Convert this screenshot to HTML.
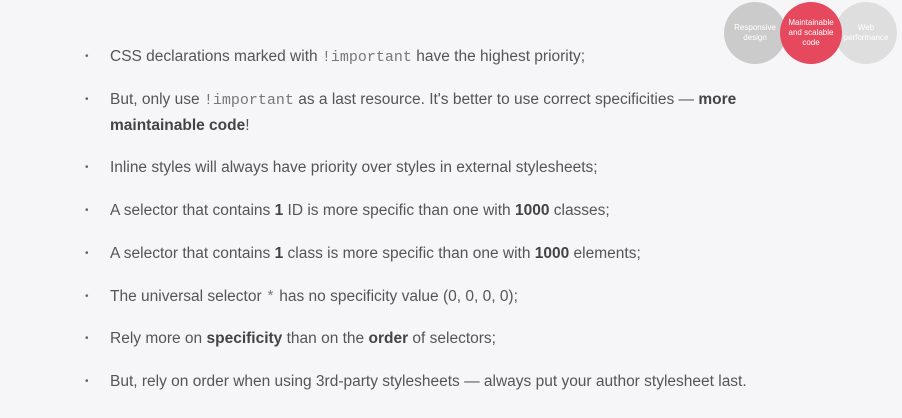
<!DOCTYPE html>
<html><head><style>
html,body{margin:0;padding:0;}
body{width:902px;height:418px;background:#f6f6f8;position:relative;overflow:hidden;font-family:"Liberation Sans",sans-serif;color:#555;}
.i{position:absolute;left:110px;font-size:15.5px;line-height:25px;white-space:nowrap;}
.i:before{content:"•";position:absolute;left:-25px;font-size:10px;color:#666;}
code{font-family:"Liberation Mono",monospace;font-size:15px;color:#777;}
b{color:#444;}
.c{position:absolute;top:2px;width:62px;height:62px;border-radius:50%;color:#fff;font-size:8px;line-height:10px;text-align:center;display:flex;align-items:center;justify-content:center;}
</style></head><body>
<div class="c" style="left:724px;background:#cbcbcb">Responsive<br>design</div>
<div class="c" style="left:835px;background:#dedede">Web<br>performance</div>
<div class="c" style="left:780px;background:#e6485e">Maintainable<br>and scalable<br>code</div>
<div class="i" style="top:44px">CSS declarations marked with <code>!important</code> have the highest priority;</div>
<div class="i" style="top:87px">But, only use <code>!important</code> as a last resource. It's better to use correct specificities — <b>more</b><br><b>maintainable code</b>!</div>
<div class="i" style="top:155px">Inline styles will always have priority over styles in external stylesheets;</div>
<div class="i" style="top:198px">A selector that contains <b>1</b> ID is more specific than one with <b>1000</b> classes;</div>
<div class="i" style="top:241px">A selector that contains <b>1</b> class is more specific than one with <b>1000</b> elements;</div>
<div class="i" style="top:284px">The universal selector <code>*</code> has no specificity value (0, 0, 0, 0);</div>
<div class="i" style="top:326px">Rely more on <b>specificity</b> than on the <b>order</b> of selectors;</div>
<div class="i" style="top:369px">But, rely on order when using 3rd-party stylesheets — always put your author stylesheet last.</div>
</body></html>
